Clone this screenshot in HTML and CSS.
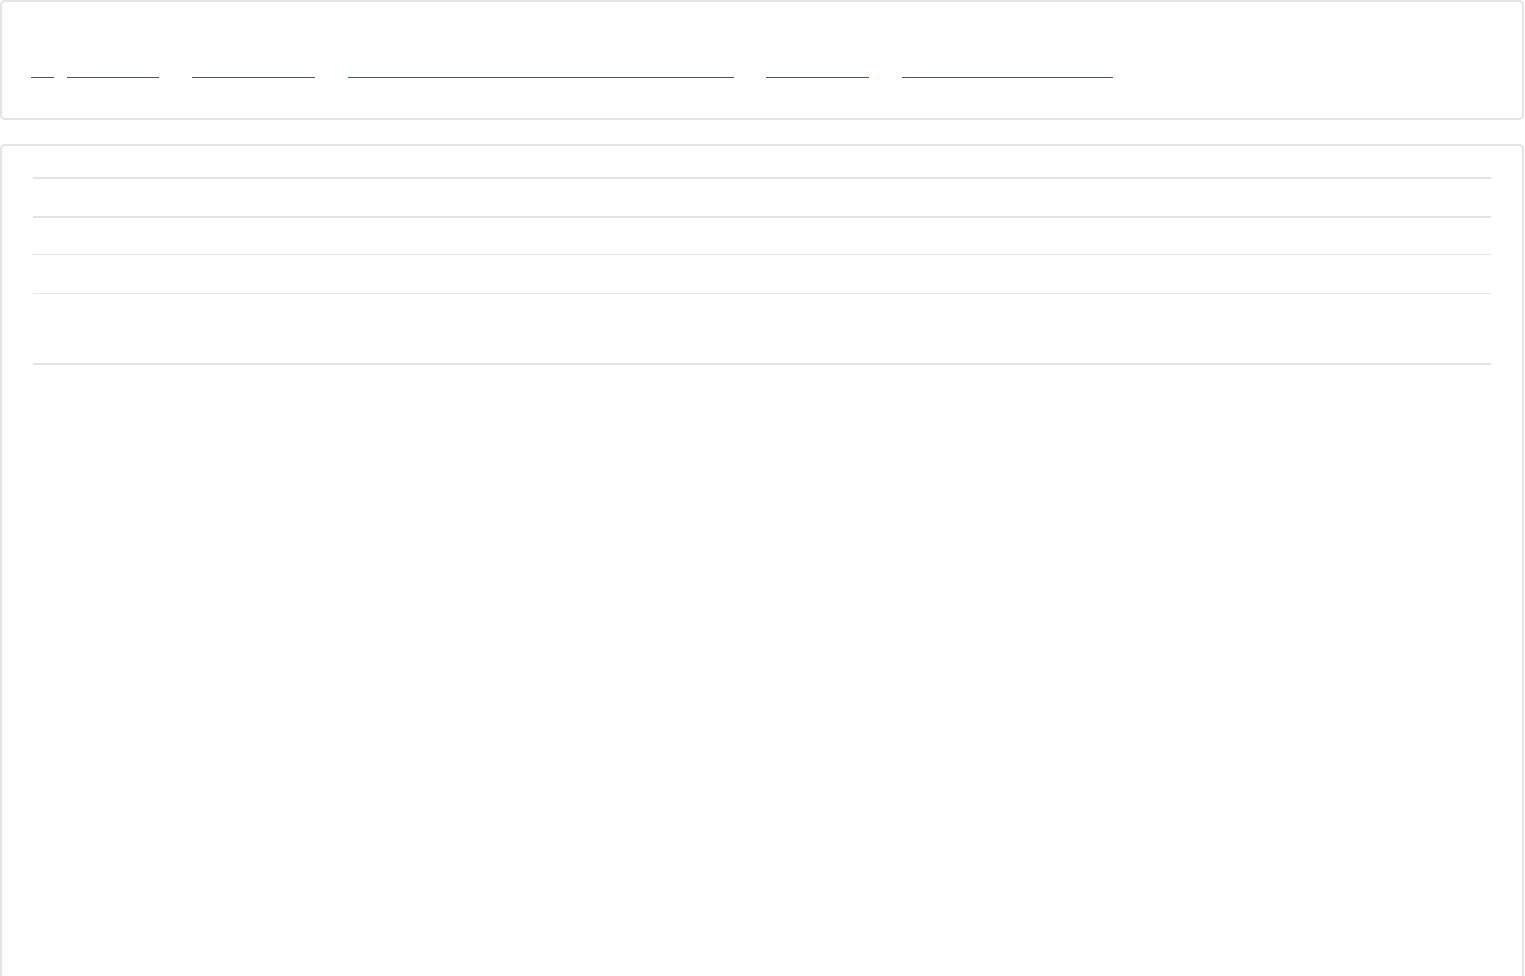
FILE: index.html
```html
<!DOCTYPE html>
<html>
<head>
<meta charset="utf-8">
<link rel="stylesheet" href="styles.css">
</head>
<body>
<div class="card nav-card">
  <nav class="crumbs">
    <span class="link w-home"></span>
    <span class="link w-a"></span>
    <span class="link w-b sep"></span>
    <span class="link w-c sep"></span>
    <span class="link w-d sep-s"></span>
    <span class="link w-e sep"></span>
  </nav>
</div>
<div class="card table-card">
  <div class="table">
    <div class="row head"></div>
    <div class="row first"></div>
    <div class="row second"></div>
    <div class="row tall"></div>
  </div>
</div>
</body>
</html>
```
FILE: styles.css
```css
html, body {
  margin: 0;
  padding: 0;
  background: #ffffff;
  font-family: "Liberation Sans", Arial, sans-serif;
}
.card {
  box-sizing: border-box;
  width: 1524px;
  border: 2px solid #e4e4e4;
  border-radius: 5px;
  background: #fff;
}
.nav-card {
  height: 120px;
  padding: 75px 0 0 29px;
}
.crumbs {
  display: flex;
  align-items: flex-start;
}
.link {
  display: block;
  height: 0;
  border-bottom: 1px solid #1f5fa6;
}
.w-home { width: 23px; }
.w-a { width: 92px; margin-left: 13px; }
.w-b { width: 123px; }
.w-c { width: 386px; }
.w-d { width: 103px; }
.w-e { width: 211px; }
.sep { margin-left: 33px; }
.sep-s { margin-left: 32px; }
.table-card {
  margin-top: 24px;
  height: 840px;
  padding: 31px 31px 0 31px;
  border-bottom: none;
  border-bottom-left-radius: 0;
  border-bottom-right-radius: 0;
}
.table {
  border-top: 2px solid #e0e3e7;
}
.row {
  height: 37px;
  border-bottom: 1px solid #e0e3e7;
}
.row.head {
  border-bottom: 2px solid #e0e3e7;
}
.row.first { height: 36px; }
.row.second { height: 38px; }
.row.tall {
  height: 69px;
  border-bottom: 2px solid #e0e3e7;
}
```
